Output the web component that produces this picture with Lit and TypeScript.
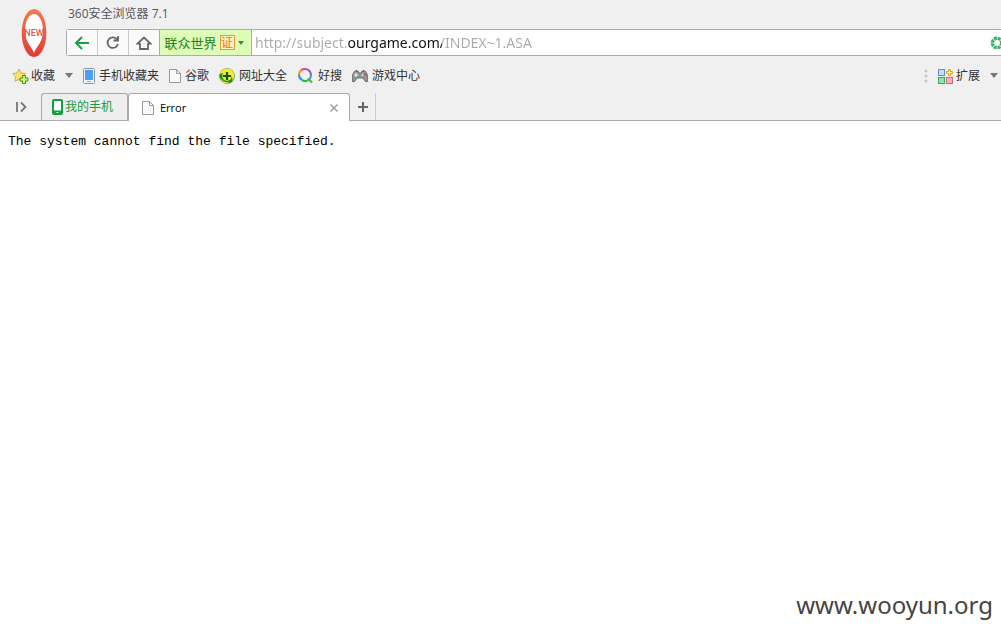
import { LitElement, html, css } from "lit";
import { customElement } from "lit/decorators.js";

const page = html`<svg width="12" height="14" viewBox="0 0 12 14"><path d="M.5.5h7l4 4v9H.5zM7.5.5v4h4" fill="#fafafa" stroke="#999"/></svg>`;
const caret = html`<svg width="8" height="5" viewBox="0 0 8 5"><path d="M0 0h8L4 5z" fill="#777"/></svg>`;

const star = html`<svg width="17" height="16" viewBox="0 0 17 16">
  <path d="M7 1l2 4 4.500.600-3.200 3.200.700 4.700-4-2.200-4 2.200.700-4.700L.700 5.600 5 5z" fill="#ffe06c" stroke="#e0ae3c"/>
  <path d="M10.500 7.500h3v2.500h2.500v3h-2.500v2.500h-3V13H8v-3h2.500z" fill="#c6f56b" stroke="#379b18"/></svg>`;
const phoneBlue = html`<svg width="12" height="16" viewBox="0 0 12 16">
  <rect x=".5" y=".5" width="11" height="15" rx="1" fill="#eef4fb" stroke="#8795a8"/>
  <rect x="2" y="2" width="8" height="10" fill="#4d9df0"/><path d="M4 13.500h4" stroke="#9aa8b8"/></svg>`;
const plusBall = html`<svg width="16" height="16" viewBox="0 0 16 16">
  <circle cx="8" cy="8" r="7.800" fill="#168c30"/>
  <path d="M.5 6C2 1 8-1 12 1.500c4 3 4.500 8 1 12C15 8 10 3 .5 6z" fill="#ffe52e"/>
  <path d="M1 9.500c2 4 6 5.500 10 4.500-4 3-9 1-10-4.500z" fill="#f5e12c"/>
  <circle cx="8" cy="8" r="4.800" fill="#f6e92e"/><path d="M8 4v8M4 8h8" stroke="#0e5c1b" stroke-width="2.200"/></svg>`;
const ring = html`<svg width="17" height="17" viewBox="0 0 17 17" fill="none" stroke-width="2.200">
  <path d="M8 2a6 6 0 0 1 6 6" stroke="#9a55c8"/><path d="M14 8a6 6 0 0 1-2 4.500" stroke="#37a8df"/>
  <path d="M12 12.500A6 6 0 0 1 5 13" stroke="#38b64b"/><path d="M5 13a6 6 0 0 1-3-5" stroke="#3795d8"/>
  <path d="M2 8a6 6 0 0 1 2.500-5" stroke="#e8a02e"/><path d="M4.500 3A6 6 0 0 1 8 2" stroke="#e24572"/>
  <path d="M11 11.500l4 4" stroke="#45b939"/></svg>`;
const gamepad = html`<svg width="16" height="14" viewBox="0 0 16 14">
  <path d="M3 2h3l1 2h2l1-2h3c2 1 3 6 3 9 0 2-2 2.500-3 1L11 9H5l-2 3c-1 1.500-3 1-3-1 0-3 1-8 3-9z" fill="#959595" stroke="#555" stroke-width=".800"/>
  <path d="M4 4v4M2 6h4" stroke="#eee" stroke-width="1.200"/><circle cx="6.500" cy="7.500" r="1" fill="#55bd66"/><circle cx="10.500" cy="6" r="1" fill="#e9e9e9"/>
  <circle cx="13" cy="5.500" r="1.300" fill="#df4d58"/><path d="M4.500 2V1M11.500 2V1" stroke="#555"/></svg>`;
const blocks = html`<svg width="16" height="16" viewBox="0 0 16 16">
  <rect x=".5" y="1.500" width="6" height="6" fill="#bfe0fa" stroke="#5795c8"/>
  <rect x=".5" y="9.500" width="6" height="6" fill="#91e4b0" stroke="#3aa766"/>
  <rect x="8.500" y="9.500" width="6" height="6" fill="#f9b3b8" stroke="#d0686e"/>
  <path d="M10.500 1.500h2v2h2v2h-2v2h-2v-2h-2v-2h2z" fill="#ffe8a0" stroke="#dfa020"/></svg>`;

const bookmarks = [
  { icon: phoneBlue, label: "手机收藏夹" },
  { icon: page, label: "谷歌" },
  { icon: plusBall, label: "网址大全" },
  { icon: ring, label: "好搜" },
  { icon: gamepad, label: "游戏中心" },
];

@customElement("app-root")
export class AppRoot extends LitElement {
  static styles = css`
    :host { display: flex; flex-direction: column; min-height: 100vh; background: #fff; overflow: hidden;
      font: 12px/18px "Open Sans", "Noto Sans CJK SC", sans-serif; color: #333; }
    * { box-sizing: border-box; }
    svg { display: block; flex: none; }
    button { font: inherit; color: inherit; background: none; border: 0; padding: 0; margin: 0;
      display: flex; align-items: center; justify-content: center; white-space: nowrap; }
    a { color: inherit; text-decoration: none; display: flex; align-items: center; gap: 4px; white-space: nowrap; }
    .chrome { background: #f0f0f0; }
    .top { display: flex; }
    .logo { flex: none; width: 66px; padding: 8px 0 0 21px; }
    .main { flex: 1; min-width: 0; }
    .title { height: 29px; padding: 5px 0 0 2px; color: #55555f; }
    .bar { display: flex; height: 27px; border: 1px solid #aaa; border-right: 0; border-radius: 3px 0 0 3px; background: #fff; }
    .nav { width: 31px; border-right: 1px solid #ccc; background: #fafafa; }
    .nav.last { width: 30px; border-right: 0; }
    .site { width: 93px; gap: 3px; padding-right: 3px; margin: -1px 0; background: #dcfcb8; border: 1px solid #8dcb62; color: #287f16; font-size: 13px; }
    .cert { width: 15px; height: 15px; border: 1px solid #e69a38; color: #dc7d18; background: #fff0c4; font-size: 12px; line-height: 13px; text-align: center; }
    .url { flex: 1; min-width: 0; border: 0; outline: 0; padding: 0 0 0 3px; font: 14px/20px "Noto Sans", sans-serif;
      background: linear-gradient(90deg, #aaa 96px, #111 96px, #111 190px, #aaa 190px);
      -webkit-background-clip: text; background-clip: text; -webkit-text-fill-color: transparent; }
    .reload { flex: none; width: 11px; overflow: hidden; justify-content: flex-start; }
    .marks { display: flex; align-items: center; height: 35px; padding: 0 3px 0 12px; gap: 10px; }
    .fav { gap: 2px; }
    .spacer { flex: 1; }
    .ext { gap: 2px; }
    .tabs { display: flex; height: 28px; padding-left: 1px; border-bottom: 1px solid #aaa; }
    .side { width: 40px; }
    .tab { height: 27px; border: 1px solid #aaa; border-bottom: 0; border-radius: 3px 3px 0 0; }
    .phone { width: 87px; color: #169c3c; gap: 2px; padding-right: 4px; background: #eee; }
    .active { display: flex; align-items: center; width: 222px; height: 28px; padding: 0 11px 0 13px; background: #fff; color: #000; gap: 6px; }
    .name { flex: 1; font-size: 11px; }
    .add { width: 26px; height: 27px; border-right: 1px solid #ccc; }
    .body { flex: 1; padding: 11px 8px; font: 13px/20px "Liberation Mono", monospace; color: #000; }
    .body p { margin: 0; }
    .mark { align-self: flex-end; padding: 0 8px 12px 0; font: 24px/34px "Noto Sans", sans-serif; color: #444; }
  `;

  render() {
    return html`
      <header class="chrome">
        <div class="top">
          <div class="logo">
            <svg width="26" height="50" viewBox="0 0 26 50" role="img" aria-label="NEW">
              <defs><linearGradient id="red" x2="0" y2="1"><stop stop-color="#f47a50"/><stop offset="1" stop-color="#e33932"/></linearGradient></defs>
              <ellipse cx="13" cy="25" rx="12.300" ry="24" fill="url(#red)"/>
              <path d="M13 45C11 39 4 34 4 23 4 13 8 6 13 6s9 7 9 17c0 11-7 16-9 22z" fill="#fff"/>
              <text x="13" y="28" text-anchor="middle" font-family="Roboto, sans-serif" font-size="9" font-weight="500" fill="#e8574a">NEW</text>
            </svg>
          </div>
          <div class="main">
            <div class="title">360安全浏览器 7.1</div>
            <div class="bar">
              <button class="nav" aria-label="后退"><svg width="16" height="14" viewBox="0 0 16 14" fill="none" stroke="#15a044" stroke-width="2"><path d="M15 7H2M8 1L2 7l6 6"/></svg></button>
              <button class="nav" aria-label="刷新"><svg width="14" height="15" viewBox="0 0 14 15" fill="none" stroke="#666" stroke-width="1.800"><path d="M11.500 5A5.300 5.300 0 1 0 12 9M12 1v4.500H7.500"/></svg></button>
              <button class="nav last" aria-label="主页"><svg width="16" height="14" viewBox="0 0 16 14" fill="none" stroke="#666" stroke-width="1.800"><path d="M3.500 7.500H1.500L8 1.500l6.500 6h-2M4 7v6h8V7"/></svg></button>
              <button class="site">联众世界<span class="cert">证</span><svg width="6" height="4" viewBox="0 0 6 4"><path d="M0 0h6L3 4z" fill="#37921f"/></svg></button>
              <input class="url" aria-label="地址" spellcheck="false" value="http://subject.ourgame.com/INDEX~1.ASA">
              <button class="reload" aria-label="极速模式"><svg width="14" height="14" viewBox="0 0 14 14"><circle cx="7" cy="7" r="4.700" fill="none" stroke="#39b36b" stroke-width="3.400" stroke-dasharray="3 .700"/></svg></button>
            </div>
          </div>
        </div>
        <nav class="marks">
          <button class="fav">${star}收藏</button>
          <button aria-label="更多收藏">${caret}</button>
          ${bookmarks.map((b) => html`<a href="#">${b.icon}${b.label}</a>`)}
          <span class="spacer"></span>
          <svg width="4" height="14" viewBox="0 0 4 14" fill="#c4c4c4"><circle cx="2" cy="2" r="1.500"/><circle cx="2" cy="7" r="1.500"/><circle cx="2" cy="12" r="1.500"/></svg>
          <button class="ext">${blocks}扩展</button>
          <button aria-label="更多扩展">${caret}</button>
        </nav>
        <div class="tabs">
          <button class="side" aria-label="侧边栏"><svg width="11" height="12" viewBox="0 0 11 12" fill="none" stroke="#777" stroke-width="1.800"><path d="M1 1v10M5 1.500L9.500 6 5 10.500"/></svg></button>
          <button class="tab phone"><svg width="11" height="16" viewBox="0 0 11 16"><rect x="1" y="1" width="9" height="14" rx="1" fill="#fff" stroke="#10a040" stroke-width="2"/><path d="M1 13h9" stroke="#10a040" stroke-width="3"/><path d="M4.500 13.500h2" stroke="#fff"/></svg>我的手机</button>
          <div class="tab active">${page}<span class="name">Error</span><button aria-label="关闭"><svg width="8" height="8" viewBox="0 0 8 8"><path d="M.5.5l7 7M7.500.500l-7 7" stroke="#999" stroke-width="1.400"/></svg></button></div>
          <button class="add" aria-label="新标签页"><svg width="10" height="10" viewBox="0 0 10 10"><path d="M5 0v10M0 5h10" stroke="#666" stroke-width="2"/></svg></button>
        </div>
      </header>
      <main class="body"><p>The system cannot find the file specified.</p></main>
      <footer class="mark">www.wooyun.org</footer>
    `;
  }
}
